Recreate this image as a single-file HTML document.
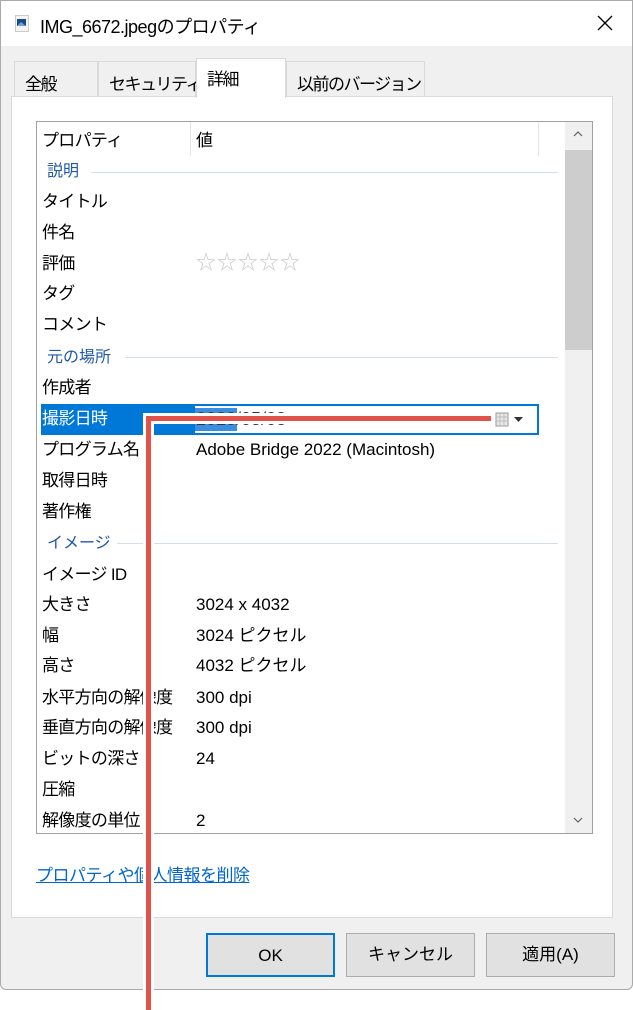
<!DOCTYPE html>
<html><head><meta charset="utf-8"><style>
*{margin:0;padding:0;box-sizing:border-box}
body{width:633px;height:1010px;background:#fff;position:relative;overflow:hidden;font-family:"Liberation Sans","Noto Sans CJK JP",sans-serif;font-size:16px;color:#000}
.win{position:absolute;left:0;top:0;width:633px;height:990px;background:#f0f0f0;box-shadow:inset 0 0 0 1px #aaa;border-radius:0 0 6px 6px}
.title{position:absolute;left:1px;top:1px;width:631px;height:45px;background:#fff}
.abs{position:absolute;white-space:nowrap}
.tab{position:absolute;top:61px;height:36px;border:1px solid #d9d9d9;border-bottom:none;background:#f0f0f0;font-size:17px;padding:8px 0 0 10px;white-space:nowrap;letter-spacing:-1.5px}
.panel{position:absolute;left:11px;top:96px;width:602px;height:822px;background:#fff;border:1px solid #d9d9d9}
.list{position:absolute;left:36px;top:121px;width:557px;height:713px;border:1px solid #a0a0a0;background:#fff;overflow:hidden}
.row{position:absolute;left:5px;font-size:17px;line-height:20px;letter-spacing:-0.7px}
.val{position:absolute;left:159px;font-size:17px;line-height:20px}
.grp{position:absolute;left:10px;color:#1e5aa8;font-size:16px;line-height:20px}
.gl{position:absolute;height:1px;background:#d5dfe9;right:34px}
.btn{position:absolute;top:933px;height:44px;width:129px;border:1px solid #adadad;background:#e1e1e1;text-align:center;line-height:42px;font-size:17px}
</style></head><body>
<div class="win">
<div class="title"></div>
<svg class="abs" style="left:15px;top:15px" width="14" height="17"><rect x="0.5" y="0.5" width="13" height="16" fill="#f4f4f4" stroke="#ccc"/><rect x="2" y="4" width="9" height="7" fill="#1a4a8a"/><path d="M2 11 L6 7 L11 11Z" fill="#6aa0d8"/></svg>
<div class="abs" style="left:40px;top:13px;font-size:18px;letter-spacing:-0.5px">IMG_6672.jpegのプロパティ</div>
<svg class="abs" style="left:597px;top:15px" width="16" height="16"><path d="M1 1L15 15M15 1L1 15" stroke="#000" stroke-width="1.3"/></svg>
<div class="tab" style="left:14px;width:84px">全般</div>
<div class="tab" style="left:98px;width:98px">セキュリティ</div>
<div class="tab" style="left:286px;width:139px">以前のバージョン</div>
<div class="panel"></div>
<div class="tab" style="left:196px;top:58px;width:90px;height:40px;background:#fff;padding-top:6px;z-index:2;border-color:#d9d9d9">詳細</div>
<div class="list">
 <div class="row" style="top:9px">プロパティ</div>
 <div class="abs" style="left:153px;top:0;width:1px;height:34px;background:#e5e5e5"></div>
 <div class="abs" style="left:501px;top:0;width:1px;height:34px;background:#e5e5e5"></div>
 <div class="val" style="top:9px">値</div>
 <div class="abs" style="left:528px;top:0;width:27px;height:711px;background:#f0f0f0"></div>
 <div class="abs" style="left:528px;top:28px;width:27px;height:200px;background:#cdcdcd"></div>
 <svg class="abs" style="left:536px;top:8px" width="10" height="8"><path d="M1 6L5 2L9 6" stroke="#606060" fill="none" stroke-width="1.2"/></svg>
 <svg class="abs" style="left:536px;top:694px" width="10" height="8"><path d="M1 2L5 6L9 2" stroke="#606060" fill="none" stroke-width="1.2"/></svg>
 <div class="grp" style="top:40px">説明</div><div class="gl" style="left:54px;top:50px"></div>
 <div class="row" style="top:70px">タイトル</div>
 <div class="row" style="top:101px">件名</div>
 <div class="row" style="top:132px">評価</div>
 <div class="val" style="top:131px;color:#c8c8c8;font-size:20px;letter-spacing:1px">☆☆☆☆☆</div>
 <div class="row" style="top:162px">タグ</div>
 <div class="row" style="top:193px">コメント</div>
 <div class="grp" style="top:226px">元の場所</div><div class="gl" style="left:88px;top:235px"></div>
 <div class="row" style="top:256px">作成者</div>
 <div class="abs" style="left:4px;top:282px;width:498px;height:31px;background:#0078d7"></div>
 <div class="abs" style="left:156px;top:282px;width:346px;height:31px;background:#fff;border:2px solid #0078d7"></div>
 <div class="abs" style="left:158px;top:286px;width:42px;height:23px;background:#3a8ee0"></div>
 <div class="abs" style="left:159px;top:287px;font-size:18px;color:#333">2020/05/08</div>
 <svg class="abs" style="left:458px;top:290px" width="36" height="16"><rect x="1" y="1" width="12" height="13" fill="#e8e8e8" stroke="#999"/><path d="M1 5H13M1 9H13M5 1V14M9 1V14" stroke="#bbb"/><path d="M19 5H28L23.5 10Z" fill="#333"/></svg>
 <div class="row" style="top:287px;color:#fff">撮影日時</div>
 <div class="row" style="top:318px">プログラム名</div>
 <div class="val" style="top:318px">Adobe Bridge 2022 (Macintosh)</div>
 <div class="row" style="top:349px">取得日時</div>
 <div class="row" style="top:380px">著作権</div>
 <div class="grp" style="top:412px">イメージ</div><div class="gl" style="left:80px;top:421px"></div>
 <div class="row" style="top:443px">イメージ ID</div>
 <div class="row" style="top:473px">大きさ</div><div class="val" style="top:473px">3024 x 4032</div>
 <div class="row" style="top:504px">幅</div><div class="val" style="top:504px">3024 ピクセル</div>
 <div class="row" style="top:534px">高さ</div><div class="val" style="top:534px">4032 ピクセル</div>
 <div class="row" style="top:566px">水平方向の解像度</div><div class="val" style="top:566px">300 dpi</div>
 <div class="row" style="top:596px">垂直方向の解像度</div><div class="val" style="top:596px">300 dpi</div>
 <div class="row" style="top:627px">ビットの深さ</div><div class="val" style="top:627px">24</div>
 <div class="row" style="top:658px">圧縮</div>
 <div class="row" style="top:689px">解像度の単位</div><div class="val" style="top:689px">2</div>
</div>
<div class="abs" style="left:36px;top:861px;font-size:17px;color:#0066cc;text-decoration:underline;letter-spacing:-0.5px">プロパティや個人情報を削除</div>
<div class="btn" style="left:206px;border:2px solid #0078d7">OK</div>
<div class="btn" style="left:346px">キャンセル</div>
<div class="btn" style="left:486px">適用(A)</div>
</div>
<div class="abs" style="left:143px;top:413px;width:351px;height:11px;background:#fff"></div>
<div class="abs" style="left:143px;top:413px;width:11px;height:597px;background:#fff"></div>
<div class="abs" style="left:146px;top:416px;width:345px;height:5px;background:#e0524a"></div>
<div class="abs" style="left:146px;top:416px;width:5px;height:594px;background:#e0524a"></div>
</body></html>
